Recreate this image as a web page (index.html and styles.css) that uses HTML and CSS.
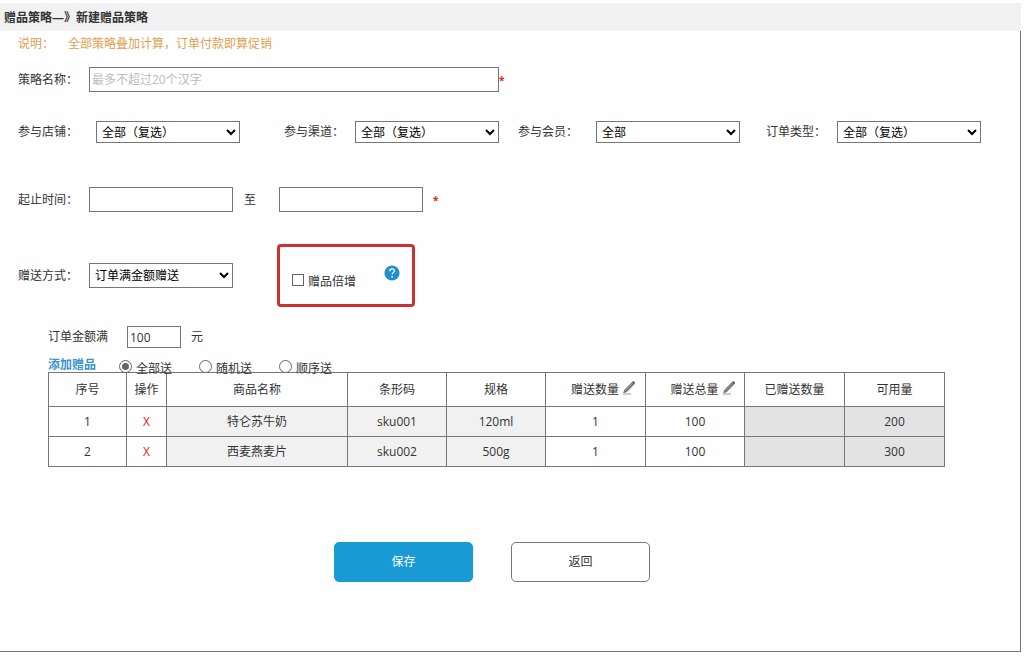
FILE: index.html
```html
<!DOCTYPE html>
<html lang="zh-CN">
<head>
<meta charset="utf-8">
<title>新建赠品策略</title>
<link rel="stylesheet" href="styles.css">
</head>
<body>
<main class="page">
  <h1 class="page-title">赠品策略—》新建赠品策略</h1>
  <form class="panel">
    <p class="note"><span>说明：</span><span>全部策略叠加计算，订单付款即算促销</span></p>

    <div class="row row-name">
      <label class="row-label" for="name">策略名称：</label>
      <input class="control control-name" id="name" type="text" placeholder="最多不超过20个汉字">
      <span class="required">*</span>
    </div>

    <div class="filters">
      <div class="field field-wide">
        <label for="shop">参与店铺：</label>
        <select class="control control-short" id="shop"><option>全部（复选）</option></select>
      </div>
      <div class="field">
        <label for="channel">参与渠道：</label>
        <select class="control control-short" id="channel"><option>全部（复选）</option></select>
      </div>
      <div class="field field-wide">
        <label for="member">参与会员：</label>
        <select class="control control-short" id="member"><option>全部</option></select>
      </div>
      <div class="field">
        <label for="type">订单类型：</label>
        <select class="control control-short" id="type"><option>全部（复选）</option></select>
      </div>
    </div>

    <div class="row row-time">
      <label class="row-label" for="start">起止时间：</label>
      <input class="control" id="start" type="text">
      <label class="to" for="end">至</label>
      <input class="control" id="end" type="text">
      <span class="required required-spaced">*</span>
    </div>

    <div class="row row-method">
      <label class="row-label" for="method">赠送方式：</label>
      <select class="control" id="method"><option>订单满金额赠送</option></select>
      <div class="highlight">
        <label class="choice"><input type="checkbox"><span>赠品倍增</span></label>
        <button class="help" type="button" aria-label="帮助">
          <svg viewBox="0 0 16 16" width="16" height="16" aria-hidden="true">
            <circle cx="8" cy="8" r="7.6" fill="#2090cb"/>
            <path d="M5.7 6.2C5.8 4.6 6.8 3.9 8.1 3.9C9.5 3.9 10.4 4.7 10.4 5.9C10.4 7.5 8.1 7.6 8.1 9.6" fill="none" stroke="#fff" stroke-width="1.2"/>
            <circle cx="8.1" cy="11.8" r=".9" fill="#fff"/>
          </svg>
        </button>
      </div>
    </div>

    <section class="gifts">
      <div class="amount">
        <label for="amount">订单金额满</label>
        <input class="control control-amount" id="amount" type="text" value="100">
        <span>元</span>
      </div>
      <div class="modes">
        <a class="add" href="#gifts">添加赠品</a>
        <label class="choice"><input type="radio" name="mode" checked><span>全部送</span></label>
        <label class="choice"><input type="radio" name="mode"><span>随机送</span></label>
        <label class="choice"><input type="radio" name="mode"><span>顺序送</span></label>
      </div>
      <table class="table" id="gifts">
        <colgroup>
          <col class="col-index"><col class="col-action"><col class="col-name">
          <col class="col-spec"><col class="col-spec"><col><col class="col-spec"><col><col>
        </colgroup>
        <thead>
          <tr>
            <th>序号</th><th>操作</th><th>商品名称</th><th>条形码</th><th>规格</th>
            <th><span class="editable">赠送数量<svg class="pencil" viewBox="0 0 14 14" width="14" height="14" aria-hidden="true"><path d="M1.2 12.3L2.2 8.9L9.8 1.3L12.2 3.5L4.5 11.2Z" fill="#777"/><path d="M9.9 1.2L10.9.3C11.6-.2 13.4 1.2 13 2.3L12.1 3.4Z" fill="#555"/><path d="M3.1 9.8L10.4 2.7" stroke="#aaa" stroke-width=".7"/><path d="M.8 13H9" stroke="#999"/></svg></span></th>
            <th><span class="editable">赠送总量<svg class="pencil" viewBox="0 0 14 14" width="14" height="14" aria-hidden="true"><path d="M1.2 12.3L2.2 8.9L9.8 1.3L12.2 3.5L4.5 11.2Z" fill="#777"/><path d="M9.9 1.2L10.9.3C11.6-.2 13.4 1.2 13 2.3L12.1 3.4Z" fill="#555"/><path d="M3.1 9.8L10.4 2.7" stroke="#aaa" stroke-width=".7"/><path d="M.8 13H9" stroke="#999"/></svg></span></th>
            <th>已赠送数量</th><th>可用量</th>
          </tr>
        </thead>
        <tbody>
          <tr>
            <td>1</td><td><button class="remove" type="button">X</button></td>
            <td class="fixed">特仑苏牛奶</td><td class="fixed">sku001</td><td class="fixed">120ml</td>
            <td>1</td><td>100</td><td class="stock"></td><td class="stock">200</td>
          </tr>
          <tr>
            <td>2</td><td><button class="remove" type="button">X</button></td>
            <td class="fixed">西麦燕麦片</td><td class="fixed">sku002</td><td class="fixed">500g</td>
            <td>1</td><td>100</td><td class="stock"></td><td class="stock">300</td>
          </tr>
        </tbody>
      </table>
    </section>

    <div class="actions">
      <button class="button button-primary" type="button">保存</button>
      <button class="button" type="button">返回</button>
    </div>
  </form>
</main>
</body>
</html>
```
FILE: styles.css
```css
* {
  box-sizing: border-box;
}

body {
  margin: 0;
  background: #fefefe;
  color: #333;
  font: 12px/18px "Open Sans", "Noto Sans CJK SC", sans-serif;
}

input,
select,
button {
  margin: 0;
  font: inherit;
}

.page {
  margin: 3px 8px 0 0;
}

.page-title {
  margin: 0;
  padding: 6px 4px 4px;
  background: #f1f1f1;
  font-size: 12px;
  font-weight: bold;
  line-height: 18px;
}

.panel {
  padding: 4px 39px 69px 18px;
  border: solid #777;
  border-width: 0 1px 1px 0;
}

.note {
  display: flex;
  gap: 14px;
  margin: 0;
  color: #e0a050;
}

.row {
  display: flex;
  align-items: center;
}

.row-label {
  width: 71px;
}

.row-name {
  margin-top: 14px;
}

.row-time {
  margin-top: 44px;
}

.row-method {
  margin-top: 32px;
}

.control {
  width: 144px;
  height: 25px;
  padding: 0 2px;
  border: 1px solid #767676;
  border-radius: 0;
  background: #fff;
  color: #000;
}

select.control {
  padding: 0 2px 0 1px;
}

.control::placeholder {
  color: #bbb;
}

.control-name {
  width: 410px;
}

.control-short {
  height: 22px;
}

.control-amount {
  width: 54px;
  height: 22px;
  color: #333;
}

.required {
  color: #d22;
  font-size: 10px;
  font-weight: bold;
}

.required-spaced {
  margin-left: 10px;
}

.to {
  width: 46px;
  padding-left: 11px;
}

.filters {
  display: grid;
  grid-template-columns: 266fr 234fr 248fr 215fr;
  margin-top: 29px;
}

.field {
  display: flex;
  align-items: center;
  gap: 11px;
}

.field-wide {
  gap: 18px;
}

.highlight {
  display: flex;
  align-items: flex-start;
  justify-content: space-between;
  width: 138px;
  height: 63px;
  margin-left: 44px;
  padding: 18px 12px 0;
  border: 3px solid #c8322f;
  border-radius: 4px;
}

.choice {
  display: flex;
  align-items: flex-start;
  gap: 4px;
}

.choice input {
  flex: none;
  appearance: none;
  width: 12px;
  height: 12px;
  margin-top: 5px;
  border: 1px solid #666;
  background: #fff;
}

.choice input:checked {
  background: #666;
}

.choice input[type="radio"] {
  width: 13px;
  height: 13px;
  margin-top: 4px;
  border-radius: 50%;
}

.choice input[type="radio"]:checked {
  background: radial-gradient(circle, #666 3px, #fff 4px);
}

.choice span {
  padding-top: 4px;
}

.highlight .choice {
  padding-top: 4px;
}

.help {
  display: flex;
  padding: 0;
  border: 0;
  background: none;
}

.gifts {
  margin-top: 19px;
  padding: 0 36px 0 30px;
}

.amount {
  display: flex;
  align-items: center;
  gap: 10px;
}

.amount label {
  width: 69px;
}

.modes {
  display: flex;
  gap: 27px;
  height: 18px;
  margin-top: 8px;
}

.add {
  margin-right: -4px;
  color: #3b92cc;
  font-weight: bold;
  text-decoration: none;
}

.table {
  width: 100%;
  margin-top: -2px;
  border-collapse: collapse;
  table-layout: fixed;
  text-align: center;
}

.table col {
  width: 100px;
}

.table .col-index {
  width: 78px;
}

.table .col-action {
  width: 40px;
}

.table .col-name {
  width: 181px;
}

.table .col-spec {
  width: 99px;
}

.table th,
.table td {
  height: 30px;
  padding: 0;
  border: 1px solid #777;
  font-weight: normal;
}

.table th {
  height: 34px;
}

.table .fixed {
  background: #f1f1f1;
}

.table .stock {
  background: #e3e3e3;
}

.editable {
  display: flex;
  justify-content: center;
  gap: 3px;
  padding-left: 16px;
}

.remove {
  padding: 0;
  border: 0;
  background: none;
  color: #d22;
}

.actions {
  display: flex;
  justify-content: center;
  gap: 38px;
  margin-top: 75px;
  padding-right: 15px;
}

.button {
  width: 139px;
  height: 40px;
  border: 1px solid #777;
  border-radius: 5px;
  background: #fff;
  color: #333;
}

.button-primary {
  border-color: #189ad5;
  background: #189ad5;
  color: #fff;
}
```
